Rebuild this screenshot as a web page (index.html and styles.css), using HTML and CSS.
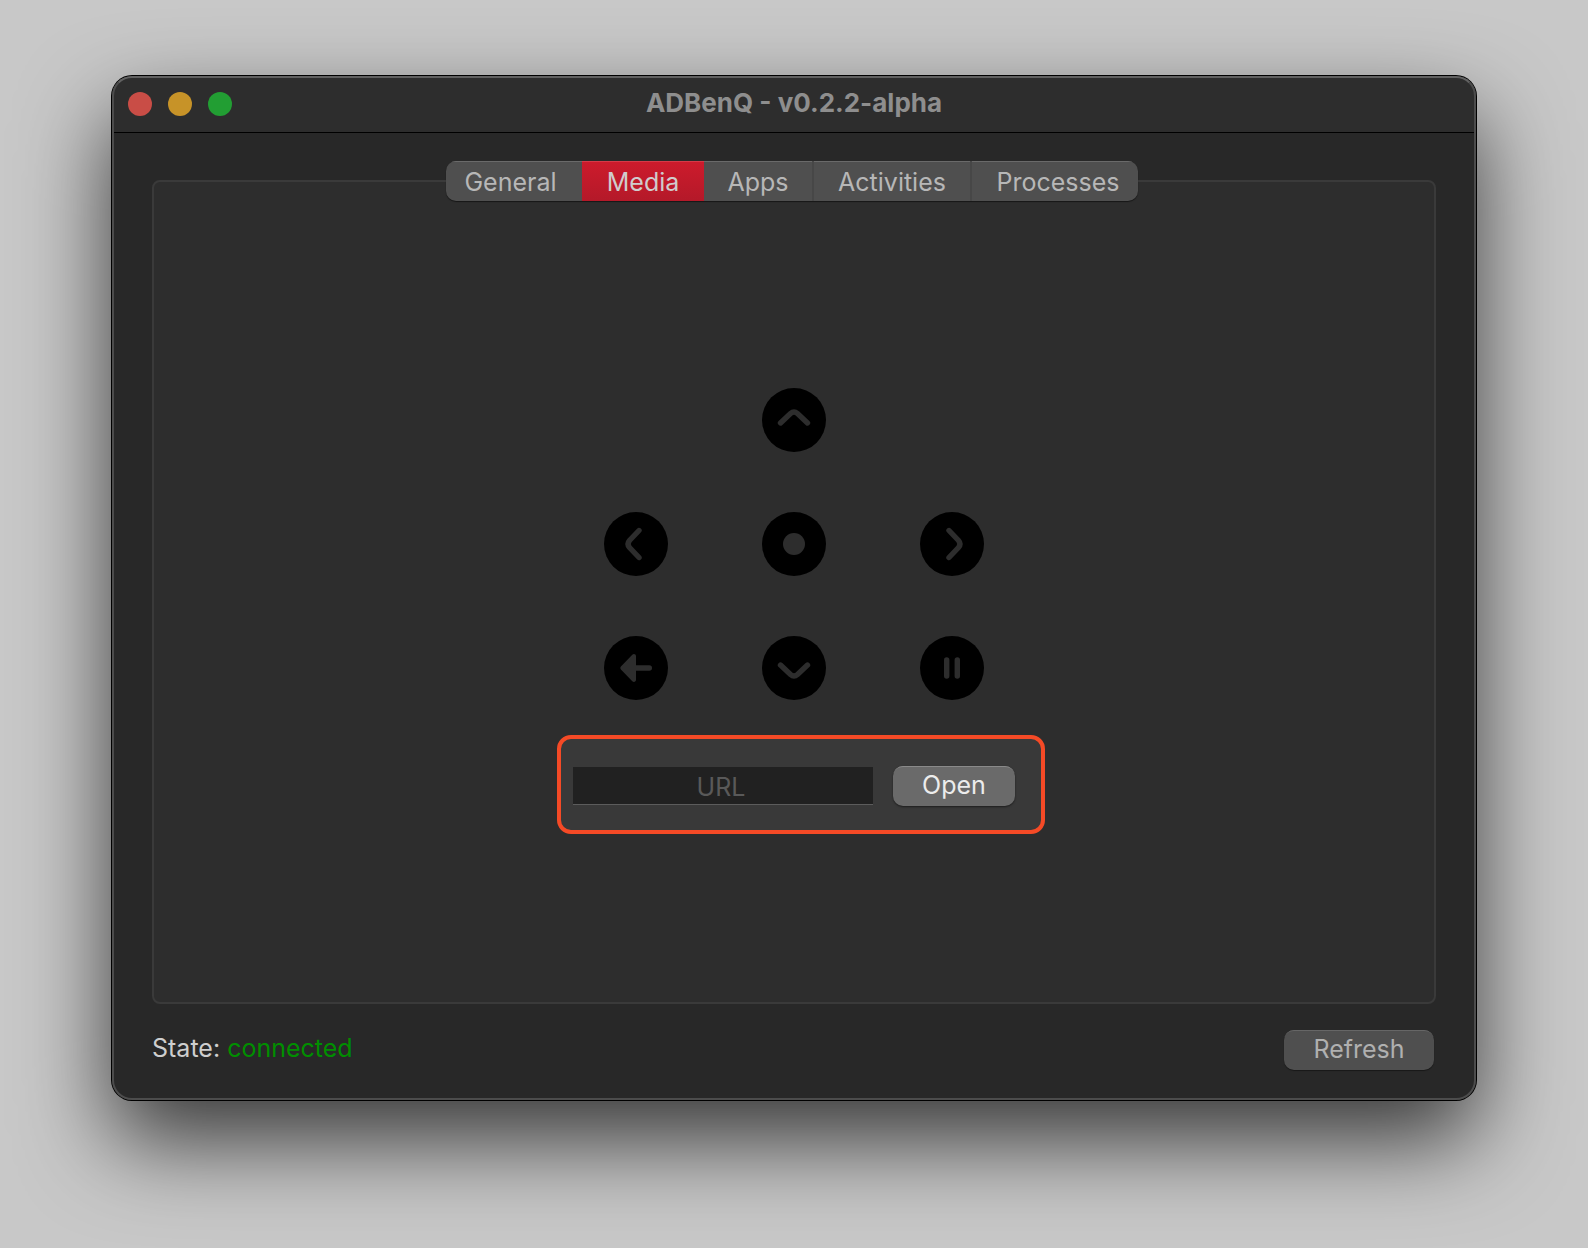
FILE: index.html
```html
<!DOCTYPE html>
<html lang="en">
<head>
<meta charset="utf-8">
<meta name="viewport" content="width=device-width, initial-scale=1">
<title>ADBenQ - v0.2.2-alpha</title>
<link rel="stylesheet" href="styles.css">
</head>
<body>
<div class="window">
  <header class="titlebar">
    <div class="lights">
      <button class="light light-close" type="button" aria-label="Close"></button>
      <button class="light light-minimize" type="button" aria-label="Minimize"></button>
      <button class="light light-zoom" type="button" aria-label="Zoom"></button>
    </div>
    <h1 class="title">ADBenQ - v0.2.2-alpha</h1>
  </header>
  <main class="content">
    <div class="tab-row">
      <div class="tabs" role="tablist">
        <button class="tab tab-first" type="button" role="tab">General</button>
        <button class="tab tab-active" type="button" role="tab" aria-selected="true">Media</button>
        <button class="tab" type="button" role="tab">Apps</button>
        <button class="tab tab-divided" type="button" role="tab">Activities</button>
        <button class="tab tab-divided tab-last" type="button" role="tab">Processes</button>
      </div>
    </div>
    <section class="panel" role="tabpanel">
      <div class="remote">
        <button class="key key-up" type="button" aria-label="Up">
          <svg viewBox="0 0 64 64"><path class="stroke" d="M18.500 35 L28.500 25.500 Q32 22.500 35.500 25.500 L45.500 35"/></svg>
        </button>
        <button class="key key-left" type="button" aria-label="Left">
          <svg viewBox="0 0 64 64"><path class="stroke" d="M35 18.500 L25.500 28.500 Q22.500 32 25.500 35.500 L35 45.500"/></svg>
        </button>
        <button class="key" type="button" aria-label="Select">
          <svg viewBox="0 0 64 64"><circle class="fill" cx="32" cy="32" r="11"/></svg>
        </button>
        <button class="key" type="button" aria-label="Right">
          <svg viewBox="0 0 64 64"><path class="stroke" d="M29 18.500 L38.500 28.500 Q41.500 32 38.500 35.500 L29 45.500"/></svg>
        </button>
        <button class="key" type="button" aria-label="Back">
          <svg viewBox="0 0 64 64"><path class="fill" d="M16.900 30.500 L28.300 18.800 C29.700 17.300 32 18.200 32 20.200 V29.300 H45.300 A2.700 2.700 0 0 1 45.300 34.700 H32 V43.800 C32 45.800 29.700 46.700 28.300 45.200 L16.900 33.500 Q15.500 32 16.900 30.500 Z"/></svg>
        </button>
        <button class="key" type="button" aria-label="Down">
          <svg viewBox="0 0 64 64"><path class="stroke" d="M18.500 29 L28.500 38.500 Q32 41.500 35.500 38.500 L45.500 29"/></svg>
        </button>
        <button class="key" type="button" aria-label="Pause">
          <svg viewBox="0 0 64 64"><path class="stroke" d="M26.700 24 V40 M37.300 24 V40"/></svg>
        </button>
      </div>
      <form class="url-form">
        <input class="url-input" type="text" placeholder="URL" aria-label="URL">
        <button class="button button-open" type="button">Open</button>
      </form>
    </section>
    <footer class="footer">
      <p class="state">State: <span class="state-value">connected</span></p>
      <button class="button button-refresh" type="button">Refresh</button>
    </footer>
  </main>
</div>
</body>
</html>
```
FILE: styles.css
```css
* {
  box-sizing: border-box;
}

body {
  margin: 0;
  min-height: 100vh;
  padding: 76px 112px 148px;
  display: flex;
  background: #c8c8c8;
  font-family: Inter, "Liberation Sans", sans-serif;
  font-size: 25px;
  line-height: 32px;
}

button,
input {
  margin: 0;
  padding: 0;
  border: 0;
  font: inherit;
  color: inherit;
}

.window {
  position: relative;
  flex: 1;
  display: flex;
  flex-direction: column;
  border-radius: 20px;
  background: #282828;
  box-shadow: 0 0 0 1px #000, 0 40px 90px rgba(0, 0, 0, 0.72);
}

/* thin light rim along the inside of the window frame */
.window::after {
  content: "";
  position: absolute;
  inset: 0;
  border: 2px solid #4c4c4c;
  border-top-color: #616161;
  border-radius: 20px;
  pointer-events: none;
}

.titlebar {
  height: 57px;
  padding: 0 16px;
  display: grid;
  grid-template-columns: 1fr auto 1fr;
  align-items: center;
  border-bottom: 1px solid #000;
  border-radius: 20px 20px 0 0;
  background: #2d2d2d;
}

.lights {
  display: flex;
  gap: 16px;
}

.light {
  width: 24px;
  height: 24px;
  border-radius: 50%;
}

.light-close { background: #c94d46; }
.light-minimize { background: #c79328; }
.light-zoom { background: #229e33; }

.title {
  margin: 0;
  padding-bottom: 2px;
  font-size: 26px;
  font-weight: 700;
  color: #8e8e8e;
}

.content {
  flex: 1;
  display: flex;
  flex-direction: column;
  padding: 28px 40px 30px;
}

.tab-row {
  position: relative;
  z-index: 1;
  display: flex;
  justify-content: center;
  margin-bottom: -21px;
  padding-right: 4px;
}

.tabs {
  display: grid;
  grid-template-columns: 136px 122px 108px 158px 168px;
  height: 40px;
  border-radius: 10px;
  overflow: hidden;
  background: #4f4f4f;
  color: #b7b7b7;
  box-shadow: 0 1px 1px rgba(0, 0, 0, 0.5);
}

.tab {
  padding-top: 1px;
  background: none;
  box-shadow: inset 0 2px 0 -1px #6a6a6a;
}

.tab-first { padding-right: 7px; }
.tab-last { padding-left: 6px; }
.tab-divided { border-left: 2px solid #474747; }

.tab-active {
  background: linear-gradient(#cd1b2c, #b41929);
  color: #d0cccd;
  box-shadow: inset 0 2px 0 -1px #d53a48;
}

.panel {
  flex: 1;
  display: flex;
  flex-direction: column;
  align-items: center;
  justify-content: center;
  gap: 66px;
  padding-top: 10px;
  border: 2px solid #3a3a3a;
  border-radius: 8px;
  background: #2d2d2d;
}

.remote {
  display: grid;
  grid-template-columns: repeat(3, 64px);
  gap: 60px 94px;
}

.key {
  width: 64px;
  height: 64px;
  border-radius: 50%;
  background: #000;
}

.key svg {
  display: block;
}

.key-up { grid-column: 2; }
.key-left { grid-column: 1; }

.stroke {
  fill: none;
  stroke: #2d2d2d;
  stroke-width: 5.4px;
  stroke-linecap: round;
}

.fill {
  fill: #2d2d2d;
}

.url-form {
  position: relative;
  z-index: 0;
  display: flex;
  align-items: center;
  gap: 20px;
}

/* highlight frame drawn around the form */
.url-form::before {
  content: "";
  position: absolute;
  z-index: -1;
  inset: -31px -30px -28px -16px;
  border: 4px solid #f54a26;
  border-radius: 14px;
  background: #393939;
}

.url-input {
  width: 300px;
  height: 38px;
  padding: 2px 4px 0 0;
  border-bottom: 1px solid #5c5c5c;
  background: #212121;
  color: #e6e6e6;
  text-align: center;
}

.url-input::placeholder {
  color: #595959;
  opacity: 1;
}

.button {
  height: 40px;
  padding-bottom: 3px;
  border-radius: 10px;
}

.button-open {
  width: 122px;
  background: #6a6a6a;
  color: #ececec;
  box-shadow: inset 0 2px 0 -1px #8a8a8a, 0 1px 2px rgba(0, 0, 0, 0.5);
}

.button-refresh {
  width: 150px;
  margin-right: 2px;
  background: #4f4f4f;
  color: #b0b0b0;
  box-shadow: inset 0 2px 0 -1px #666, 0 1px 1px rgba(0, 0, 0, 0.4);
}

.footer {
  display: flex;
  align-items: center;
  justify-content: space-between;
  padding-top: 26px;
}

.state {
  margin: 0;
  padding-bottom: 4px;
  color: #cecece;
}

.state-value {
  color: #008f00;
}
```
